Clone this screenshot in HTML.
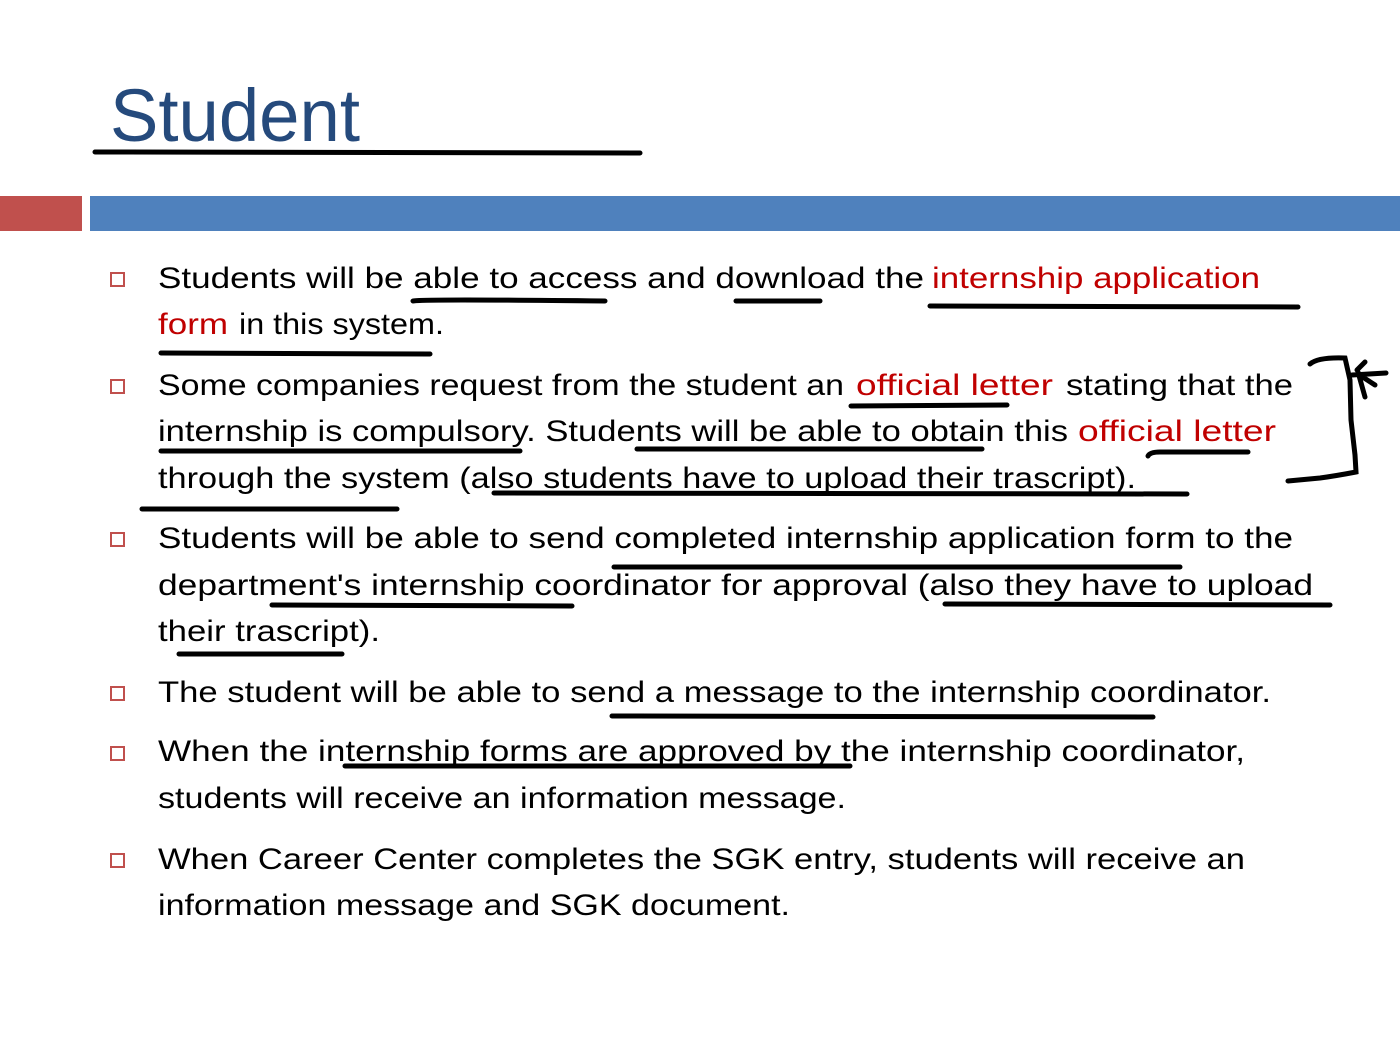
<!DOCTYPE html>
<html><head><meta charset="utf-8"><style>html,body{margin:0;padding:0;background:#fff;width:1400px;height:1050px;overflow:hidden}</style></head>
<body>
<svg width="1400" height="1050" viewBox="0 0 1400 1050" xmlns="http://www.w3.org/2000/svg" font-family="Liberation Sans, DejaVu Sans, sans-serif">
<rect width="1400" height="1050" fill="#fff"/>
<text x="110" y="141" font-size="74" fill="#254a7c" textLength="250" lengthAdjust="spacingAndGlyphs">Student</text>
<rect x="0" y="196" width="82" height="35" fill="#c0504d"/>
<rect x="90" y="196" width="1310" height="35" fill="#4f81bd"/>
<g fill="none" stroke="#c0504d" stroke-width="2">
<rect x="111" y="273" width="13" height="13"/>
<rect x="111" y="380" width="13" height="13"/>
<rect x="111" y="533" width="13" height="13"/>
<rect x="111" y="687" width="13" height="13"/>
<rect x="111" y="747" width="13" height="13"/>
<rect x="111" y="854" width="13" height="13"/>
</g>
<g font-size="30" fill="#000" transform="translate(0,-2)">
<text x="158" y="290" textLength="766" lengthAdjust="spacingAndGlyphs">Students will be able to access and download the</text>
<text x="932" y="290" fill="#c00000" textLength="328" lengthAdjust="spacingAndGlyphs">internship application</text>
<text x="158" y="336" fill="#c00000" textLength="70" lengthAdjust="spacingAndGlyphs">form</text>
<text x="239" y="336" textLength="205" lengthAdjust="spacingAndGlyphs">in this system.</text>
<text x="158" y="397" textLength="686" lengthAdjust="spacingAndGlyphs">Some companies request from the student an</text>
<text x="856" y="397" fill="#c00000" textLength="197" lengthAdjust="spacingAndGlyphs">official letter</text>
<text x="1066" y="397" textLength="227" lengthAdjust="spacingAndGlyphs">stating that the</text>
<text x="158" y="443" textLength="910" lengthAdjust="spacingAndGlyphs">internship is compulsory. Students will be able to obtain this</text>
<text x="1078" y="443" fill="#c00000" textLength="198" lengthAdjust="spacingAndGlyphs">official letter</text>
<text x="158" y="490" textLength="978" lengthAdjust="spacingAndGlyphs">through the system (also students have to upload their trascript).</text>
<text x="158" y="550" textLength="1135" lengthAdjust="spacingAndGlyphs">Students will be able to send completed internship application form to the</text>
<text x="158" y="597" textLength="1155" lengthAdjust="spacingAndGlyphs">department's internship coordinator for approval (also they have to upload</text>
<text x="158" y="643" textLength="222" lengthAdjust="spacingAndGlyphs">their trascript).</text>
<text x="158" y="704" textLength="1113" lengthAdjust="spacingAndGlyphs">The student will be able to send a message to the internship coordinator.</text>
<text x="158" y="763" textLength="1087" lengthAdjust="spacingAndGlyphs">When the internship forms are approved by the internship coordinator,</text>
<text x="158" y="810" textLength="688" lengthAdjust="spacingAndGlyphs">students will receive an information message.</text>
<text x="158" y="871" textLength="1087" lengthAdjust="spacingAndGlyphs">When Career Center completes the SGK entry, students will receive an</text>
<text x="158" y="917" textLength="632" lengthAdjust="spacingAndGlyphs">information message and SGK document.</text>
</g>
<g stroke="#000" stroke-width="5" stroke-linecap="round" fill="none">
<path d="M95,152 L640,153"/>
<path d="M413,301 Q420,299 605,301"/>
<path d="M736,301 L820,301"/>
<path d="M930,306 L1298,307"/>
<path d="M161,353 L430,354"/>
<path d="M851,406 L1007,405"/>
<path d="M161,451 L520,451"/>
<path d="M637,449 L982,449"/>
<path d="M1148,456 Q1150,452 1160,452 L1248,452"/>
<path d="M142,509 L397,509"/>
<path d="M494,493 L1187,494"/>
<path d="M614,567 L1180,567"/>
<path d="M272,605 L572,606"/>
<path d="M945,604 L1330,605"/>
<path d="M179,654 L342,654"/>
<path d="M612,716 L1153,717"/>
<path d="M345,766 L850,766"/>
<path d="M1310,364 Q1318,357 1345,358 L1350,380 L1351,420 L1355,455 L1356,472 Q1335,476 1320,478 L1288,481"/>
<path d="M1352,375 L1386,373 M1358,372 L1365,397 M1357,370 L1365,362 M1358,374 L1375,385"/>
</g>
</svg>
</body></html>
